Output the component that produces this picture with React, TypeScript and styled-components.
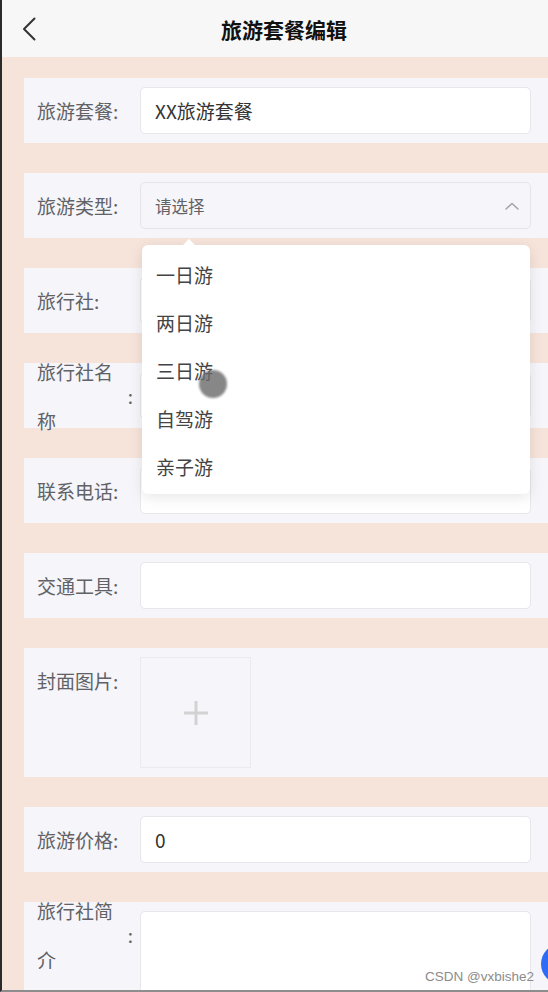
import React from 'react';
import styled, { createGlobalStyle } from 'styled-components';

const GlobalStyle = createGlobalStyle`
  html, body {
    margin: 0;
    padding: 0;
    overflow: hidden;
  }
  body {
    font-family: 'Noto Sans CJK SC', 'Noto Sans', sans-serif;
  }
`;

const Page = styled.div`
  position: relative;
  width: 548px;
  height: 992px;
  box-sizing: border-box;
  overflow: hidden;
  background: #f6e3da;
  border-left: 2px solid #2b2b2b;
  border-bottom: 2px solid #8d8d8d;
`;

const Header = styled.header`
  display: grid;
  grid-template-columns: 60px 1fr 42px;
  align-items: center;
  height: 57px;
  background: #f7f7f7;
`;

const Back = styled.button`
  display: flex;
  align-items: center;
  border: none;
  background: none;
  padding: 0 0 0 20px;
  height: 57px;
  cursor: pointer;
`;

const Title = styled.h1`
  margin: 0;
  text-align: center;
  font-size: 21px;
  font-weight: 700;
  color: #111;
`;

const Form = styled.form`
  display: flex;
  flex-direction: column;
  gap: 30px;
  padding-top: 21px;
`;

const Row = styled.div`
  position: relative;
  display: flex;
  align-items: flex-start;
  margin-left: 22px;
  padding: 9px 17px 9px 13px;
  background: #f6f5fa;
`;

const Label = styled.label`
  display: flex;
  align-items: center;
  flex-shrink: 0;
  width: 96px;
  height: 47px;
  margin-right: 7px;
  font-size: 19px;
  line-height: 49px;
  color: #606266;
`;

const Colon = styled.span`
  flex-shrink: 0;
`;

const Field = styled.div<{ $tall?: boolean }>`
  flex: 1;
  display: flex;
  align-items: ${(p) => (p.$tall ? 'flex-start' : 'center')};
  height: ${(p) => (p.$tall ? '110px' : '47px')};
  box-sizing: border-box;
  padding: 0 14px;
  background: #fff;
  border: 1px solid #e6e6eb;
  border-radius: 5px;
  font-size: 19px;
  color: #333;
`;

const SelectBox = styled(Field)`
  position: relative;
  justify-content: space-between;
  background: transparent;
  border-color: #e4e4ea;
  padding-right: 10px;
`;

const Placeholder = styled.span`
  font-size: 16.5px;
  color: #606266;
`;

const Popover = styled.ul`
  position: absolute;
  z-index: 5;
  top: 62px;
  left: 1px;
  width: 388px;
  margin: 0;
  padding: 6px 0 3px;
  list-style: none;
  background: #fff;
  border-radius: 6px;
  box-shadow: 0 3px 14px rgba(0, 0, 0, 0.1);

  &::before {
    content: '';
    position: absolute;
    top: -6px;
    left: 41px;
    border-left: 6px solid transparent;
    border-right: 6px solid transparent;
    border-bottom: 6px solid #fff;
  }
`;

const Option = styled.li`
  height: 48px;
  line-height: 48px;
  padding-left: 14px;
  font-size: 19px;
  color: #444;
`;

const Touch = styled.span`
  position: absolute;
  left: 57px;
  top: 125px;
  width: 28px;
  height: 28px;
  border-radius: 50%;
  background: rgba(105, 105, 105, 0.8);
  filter: blur(0.8px);
`;

const Upload = styled.div`
  display: flex;
  align-items: center;
  justify-content: center;
  width: 111px;
  height: 111px;
  box-sizing: border-box;
  border: 1px solid #ebebef;
  background: #f6f5fa;
`;

const Watermark = styled.span`
  position: absolute;
  right: 14px;
  bottom: 6px;
  font-family: 'Liberation Sans', Arial, sans-serif;
  font-size: 13.5px;
  color: #8c8c8c;
`;

const FloatButton = styled.span`
  position: absolute;
  left: 539px;
  top: 944px;
  width: 40px;
  height: 40px;
  border-radius: 50%;
  background: #2f6cf5;
`;

const types = ['一日游', '两日游', '三日游', '自驾游', '亲子游'];

const FormLabel = ({ text }: { text: string }) => (
  <Label>
    <span>{text}</span>
    <Colon>:</Colon>
  </Label>
);

export default function App() {
  return (
    <>
      <GlobalStyle />
      <Page>
        <Header>
          <Back type="button" aria-label="back">
            <svg width="14" height="24" viewBox="0 0 14 24" fill="none">
              <path d="M12.5 1.5 2 12l10.5 10.5" stroke="#333" strokeWidth="2" strokeLinecap="round" strokeLinejoin="round" />
            </svg>
          </Back>
          <Title>旅游套餐编辑</Title>
          <span />
        </Header>

        <Form>
          <Row>
            <FormLabel text="旅游套餐" />
            <Field>XX旅游套餐</Field>
          </Row>
          <Row>
            <FormLabel text="旅游类型" />
            <SelectBox>
              <Placeholder>请选择</Placeholder>
              <svg width="16" height="10" viewBox="0 0 16 10" fill="none">
                <path d="M2 8l6-5.5L14 8" stroke="#a3a3a3" strokeWidth="1.5" strokeLinecap="round" strokeLinejoin="round" />
              </svg>
              <Popover>
                {types.map((t) => (
                  <Option key={t}>{t}</Option>
                ))}
                <Touch />
              </Popover>
            </SelectBox>
          </Row>
          <Row>
            <FormLabel text="旅行社" />
            <Field />
          </Row>
          <Row>
            <FormLabel text="旅行社名称" />
            <Field />
          </Row>
          <Row>
            <FormLabel text="联系电话" />
            <Field />
          </Row>
          <Row>
            <FormLabel text="交通工具" />
            <Field />
          </Row>
          <Row>
            <FormLabel text="封面图片" />
            <Upload>
              <svg width="26" height="26" viewBox="0 0 26 26">
                <path d="M13 1v24M1 13h24" stroke="#d2d2d2" strokeWidth="3" />
              </svg>
            </Upload>
          </Row>
          <Row>
            <FormLabel text="旅游价格" />
            <Field>0</Field>
          </Row>
          <Row>
            <FormLabel text="旅行社简介" />
            <Field $tall />
          </Row>
        </Form>

        <FloatButton />
        <Watermark>CSDN @vxbishe2</Watermark>
      </Page>
    </>
  );
}
